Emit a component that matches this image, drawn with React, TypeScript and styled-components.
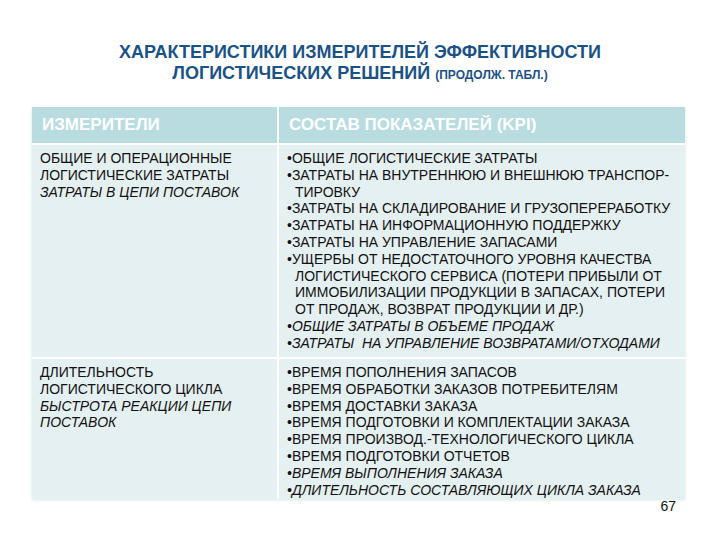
import React from "react";
import styled, { createGlobalStyle } from "styled-components";

const GlobalStyle = createGlobalStyle`
  html, body {
    margin: 0;
    padding: 0;
    background: #ffffff;
  }
  body {
    font-family: "Liberation Sans", Arial, sans-serif;
  }
`;

// each item is a list of the lines it shows, as the slide breaks them
type Item = { lines: string[]; italic?: boolean };

const costs: Item[] = [
  { lines: ["ОБЩИЕ ЛОГИСТИЧЕСКИЕ ЗАТРАТЫ"] },
  { lines: ["ЗАТРАТЫ НА ВНУТРЕННЮЮ И ВНЕШНЮЮ ТРАНСПОР-", "ТИРОВКУ"] },
  { lines: ["ЗАТРАТЫ НА СКЛАДИРОВАНИЕ И ГРУЗОПЕРЕРАБОТКУ"] },
  { lines: ["ЗАТРАТЫ НА ИНФОРМАЦИОННУЮ ПОДДЕРЖКУ"] },
  { lines: ["ЗАТРАТЫ НА УПРАВЛЕНИЕ ЗАПАСАМИ"] },
  {
    lines: [
      "УЩЕРБЫ ОТ НЕДОСТАТОЧНОГО УРОВНЯ КАЧЕСТВА",
      "ЛОГИСТИЧЕСКОГО СЕРВИСА (ПОТЕРИ ПРИБЫЛИ ОТ",
      "ИММОБИЛИЗАЦИИ ПРОДУКЦИИ В ЗАПАСАХ, ПОТЕРИ",
      "ОТ ПРОДАЖ, ВОЗВРАТ ПРОДУКЦИИ И ДР.)",
    ],
  },
  { lines: ["ОБЩИЕ ЗАТРАТЫ В ОБЪЕМЕ ПРОДАЖ"], italic: true },
  { lines: ["ЗАТРАТЫ\u00a0 НА УПРАВЛЕНИЕ ВОЗВРАТАМИ/ОТХОДАМИ"], italic: true },
];

const times: Item[] = [
  { lines: ["ВРЕМЯ ПОПОЛНЕНИЯ ЗАПАСОВ"] },
  { lines: ["ВРЕМЯ ОБРАБОТКИ ЗАКАЗОВ ПОТРЕБИТЕЛЯМ"] },
  { lines: ["ВРЕМЯ ДОСТАВКИ ЗАКАЗА"] },
  { lines: ["ВРЕМЯ ПОДГОТОВКИ И КОМПЛЕКТАЦИИ ЗАКАЗА"] },
  { lines: ["ВРЕМЯ ПРОИЗВОД.-ТЕХНОЛОГИЧЕСКОГО ЦИКЛА"] },
  { lines: ["ВРЕМЯ ПОДГОТОВКИ ОТЧЕТОВ"] },
  { lines: ["ВРЕМЯ ВЫПОЛНЕНИЯ ЗАКАЗА"], italic: true },
  { lines: ["ДЛИТЕЛЬНОСТЬ СОСТАВЛЯЮЩИХ ЦИКЛА ЗАКАЗА"], italic: true },
];

const BulletList: React.FC<{ items: Item[] }> = ({ items }) => (
  <>
    {items.map((item, i) => (
      <Bullet key={i} $italic={item.italic}>
        {item.lines.map((l, j) => (
          <Line key={j} $indent={j > 0}>
            {j === 0 ? "•" : ""}
            {l}
          </Line>
        ))}
      </Bullet>
    ))}
  </>
);

export default function App() {
  return (
    <Page>
      <GlobalStyle />
      <Title>
        ХАРАКТЕРИСТИКИ ИЗМЕРИТЕЛЕЙ ЭФФЕКТИВНОСТИ
        <br />
        ЛОГИСТИЧЕСКИХ РЕШЕНИЙ <Small>(ПРОДОЛЖ. ТАБЛ.)</Small>
      </Title>

      <Table>
        <HeadCell>ИЗМЕРИТЕЛИ</HeadCell>
        <HeadCell>СОСТАВ ПОКАЗАТЕЛЕЙ (KPI)</HeadCell>

        <Cell $height={212}>
          <Line>ОБЩИЕ И ОПЕРАЦИОННЫЕ</Line>
          <Line>ЛОГИСТИЧЕСКИЕ ЗАТРАТЫ</Line>
          <Line $italic>ЗАТРАТЫ В ЦЕПИ ПОСТАВОК</Line>
        </Cell>
        <Cell $height={212}>
          <BulletList items={costs} />
        </Cell>

        <Cell $height={140}>
          <Line>ДЛИТЕЛЬНОСТЬ</Line>
          <Line>ЛОГИСТИЧЕСКОГО ЦИКЛА</Line>
          <Line $italic>БЫСТРОТА РЕАКЦИИ ЦЕПИ</Line>
          <Line $italic>ПОСТАВОК</Line>
        </Cell>
        <Cell $height={140}>
          <BulletList items={times} />
        </Cell>
      </Table>

      <PageNum>67</PageNum>
    </Page>
  );
}

const Page = styled.div`
  width: 720px;
  height: 540px;
  overflow: hidden;
  padding-top: 42px;
  box-sizing: border-box;
`;

const Title = styled.h1`
  margin: 0 0 21px;
  text-align: center;
  font-family: "Liberation Sans", Arial, sans-serif;
  font-weight: 700;
  font-size: 18px;
  line-height: 21px;
  color: #1b5286;
`;

const Small = styled.span`
  font-size: 12px;
`;

const Table = styled.div`
  margin-left: 32px;
  display: grid;
  grid-template-columns: 245px 406px;
  gap: 2px;
  width: 653px;
  background: #ffffff;
  box-shadow: 0 1px 3px rgba(150, 190, 170, 0.35);
`;

const HeadCell = styled.div`
  height: 36px;
  display: flex;
  align-items: center;
  padding-left: 10px;
  background: #b8dce0;
  color: #ffffff;
  font-weight: 700;
  font-size: 17px;
`;

const Cell = styled.div<{ $height: number }>`
  height: ${(p) => p.$height}px;
  box-sizing: border-box;
  padding: 5px 4px 0 8px;
  background: #e5f0f2;
  color: #111111;
  font-size: 14px;
  line-height: 16.8px;
`;

const Line = styled.div<{ $italic?: boolean; $indent?: boolean }>`
  font-style: ${(p) => (p.$italic ? "italic" : "inherit")};
  padding-left: ${(p) => (p.$indent ? 8 : 0)}px;
  white-space: nowrap;
`;

const Bullet = styled.div<{ $italic?: boolean }>`
  font-style: ${(p) => (p.$italic ? "italic" : "normal")};
`;

const PageNum = styled.div`
  width: 676px;
  margin-top: -1px;
  text-align: right;
  font-size: 14px;
  color: #111111;
`;
